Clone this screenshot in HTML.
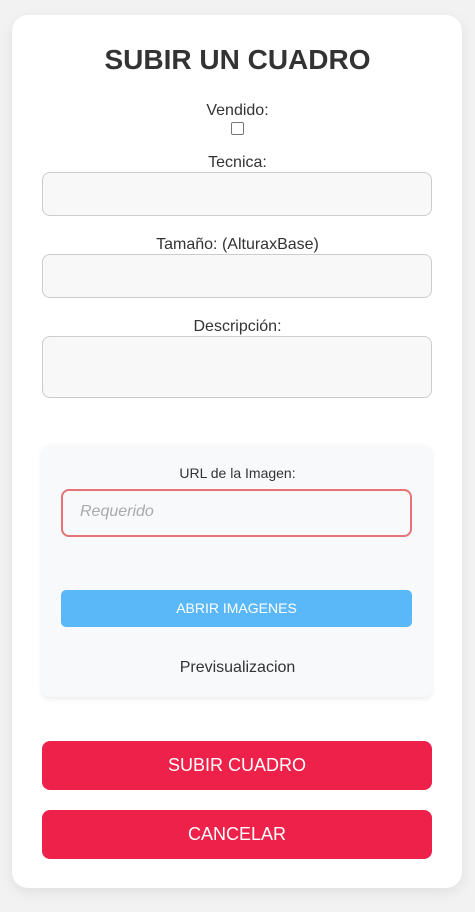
<!DOCTYPE html>
<html><head><meta charset="utf-8"><style>
body{margin:0;width:475px;height:912px;background:#f2f2f2;font-family:"Liberation Sans",Arial,sans-serif;color:#333;position:relative;overflow:hidden}
.a{position:absolute}
.card{left:12px;top:15px;width:450px;height:873px;background:#fff;border-radius:16px;box-shadow:0 4px 14px rgba(0,0,0,0.08)}
.c{left:0;width:475px;text-align:center}
.lbl{font-size:16px;line-height:18px}
.in{left:42px;width:388px;background:#f8f8f8;border:1px solid #ccc;border-radius:8px}
.btn{left:42px;width:390px;height:49px;background:#ed2149;border-radius:8px;color:#fff;font-size:18px;text-align:center;line-height:49px}
</style></head><body>
<div class="a card"></div>
<div class="a c" style="top:43px;font-size:28px;font-weight:bold;line-height:34px">SUBIR UN CUADRO</div>
<div class="a c lbl" style="top:102px">Vendido:</div>
<div class="a" style="left:231px;top:122px;width:11px;height:11px;border:1px solid #767676;border-radius:2px;background:#fff"></div>
<div class="a c lbl" style="top:154px">Tecnica:</div>
<div class="a in" style="top:172px;height:42px"></div>
<div class="a c lbl" style="top:236px">Tamaño: (AlturaxBase)</div>
<div class="a in" style="top:254px;height:42px"></div>
<div class="a c lbl" style="top:318px">Descripción:</div>
<div class="a in" style="top:336px;height:60px"></div>
<div class="a" style="left:42px;top:445px;width:390px;height:252px;background:#f7f9fb;border-radius:8px;box-shadow:0 2px 6px rgba(0,0,0,0.08)"></div>
<div class="a c" style="top:465px;font-size:14px;line-height:16px">URL de la Imagen:</div>
<div class="a" style="left:61px;top:489px;width:347px;height:44px;border:2px solid #e57377;border-radius:8px;background:#f7f9fb"></div>
<div class="a" style="left:80px;top:503px;font-size:16px;font-style:italic;color:#aaa;line-height:18px">Requerido</div>
<div class="a" style="left:61px;top:590px;width:351px;height:37px;background:#5bb8f8;border-radius:5px;color:#fff;font-size:14px;text-align:center;line-height:37px">ABRIR IMAGENES</div>
<div class="a c lbl" style="top:659px">Previsualizacion</div>
<div class="a btn" style="top:741px">SUBIR CUADRO</div>
<div class="a btn" style="top:810px">CANCELAR</div>
</body></html>
